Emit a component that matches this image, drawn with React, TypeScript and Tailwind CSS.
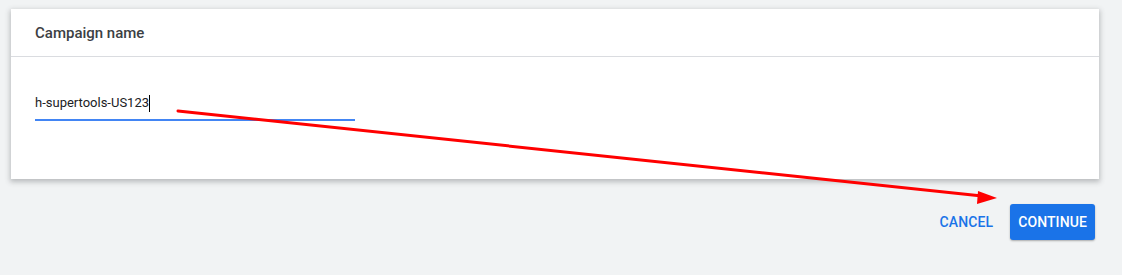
export default function App() {
  return (
    <div className="relative h-[275px] w-[1122px] overflow-hidden bg-[#f1f3f4] font-['Roboto','Liberation_Sans',sans-serif]">
      <div className="pl-[11px] pt-[9px]">
        <div className="w-[1088px] bg-white shadow-[0_2px_5px_1px_rgba(60,64,67,0.3)]">
          <div className="flex h-[48px] items-center border-b border-[#dadce0] px-[24px] pt-[2px]">
            <h2 className="text-[15px] font-medium text-[#3c4043]">Campaign name</h2>
          </div>
          <div className="h-[122px] px-[24px] pt-[36px]">
            <div className="w-[320px] border-b-2 border-[#4285f4] pb-[6px]">
              <div className="flex h-[20px] items-center">
                <span className="text-[13px] leading-[20px] text-[#202124]">h-supertools-US123</span>
                <span className="h-[17px] w-px bg-black" />
              </div>
            </div>
          </div>
        </div>
      </div>
      <div className="flex justify-end gap-[17px] pr-[27px] pt-[25px]">
        <button className="h-[36px] px-0 text-[14px] font-medium tracking-[0.1px] text-[#1a73e8]">CANCEL</button>
        <button className="h-[36px] rounded-[3px] bg-[#1a73e8] px-[8px] text-[14px] font-medium tracking-[0.1px] text-white shadow-[0_1px_2px_rgba(0,0,0,0.3)]">
          CONTINUE
        </button>
      </div>
      <svg className="pointer-events-none absolute left-0 top-0" width="1122" height="275">
        <line x1="178" y1="111" x2="982" y2="196" stroke="#ff0000" strokeWidth="3" strokeLinecap="round" />
        <polygon points="997,198 978,191 977,204" fill="#ff0000" />
      </svg>
    </div>
  );
}
